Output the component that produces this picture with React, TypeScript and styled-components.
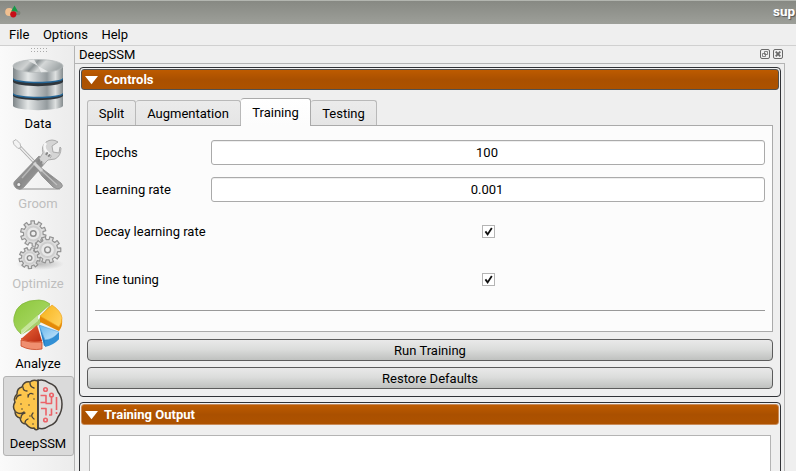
import React from "react";
import styled, { createGlobalStyle, css } from "styled-components";

const Global = createGlobalStyle`
  * { box-sizing: border-box; }
  html, body { margin: 0; background: #efefef; overflow: hidden; }
  body { font: 13px/16px Roboto, "Liberation Sans", sans-serif; color: #000; }
`;

const Window = styled.div`
  width: 796px;
  height: 471px;
  display: flex;
  flex-direction: column;
  overflow: hidden;
  background: #efefef;
`;
const TitleBar = styled.header`
  flex: 0 0 24px;
  display: flex;
  justify-content: space-between;
  padding-left: 4px;
  border-top: 1px solid #b3b6b0;
  background: linear-gradient(#878983, #9d9f99);
  overflow: hidden;
`;
const WindowName = styled.span`
  width: 24px;
  padding-left: 1px;
  white-space: nowrap;
  color: #fff;
  font-weight: 700;
  font-size: 13.5px;
  line-height: 21px;
  text-shadow: 1px 1px 1px #555;
`;
const MenuBar = styled.nav`
  flex: 0 0 22px;
  display: flex;
  gap: 13.5px;
  padding: 3px 9px 0;
  border-bottom: 1px solid #d0d0d0;
`;
const Body = styled.div`
  flex: 1;
  min-height: 0;
  display: flex;
`;
const Toolbar = styled.aside`
  flex: 0 0 75px;
  padding: 0 0 0 3px;
  border-right: 1px solid #b4b4b4;
  background: linear-gradient(90deg, #fafafa, #ececec);
`;
const Grip = styled.svg`
  display: block;
  height: 10px;
  width: 71px;
`;
const Tool = styled.div<{ $state?: "off" | "on" }>`
  width: 71px;
  height: 80px;
  display: flex;
  flex-direction: column;
  align-items: center;
  padding: 2px 1px 0 0;
  border: 1px solid transparent;
  border-radius: 3px;
  white-space: nowrap;
  svg { width: 52px; height: 52px; margin-bottom: 5px; flex: none; }
  ${(p) => p.$state === "off" && css`color: #bebebe;`}
  ${(p) => p.$state === "on" && css`background: #dadada; border-color: #b3b3b3;`}
`;
const Dock = styled.main`
  flex: 0 0 710px;
  display: flex;
  flex-direction: column;
`;
const DockTitle = styled.div`
  flex: 0 0 17px;
  display: flex;
  align-items: center;
  padding: 0 2px 0 4px;
  span { flex: 1; }
  svg { margin: 0 0 1px 3px; }
`;
const DockContent = styled.div`
  flex: 1;
  display: flex;
  flex-direction: column;
  gap: 5px;
  padding: 3px 3px 0 4px;
  border: solid #b4b4b4;
  border-width: 1px 1px 0 0;
`;
const Group = styled.section<{ $height: number }>`
  flex: 0 0 ${(p) => p.$height}px;
  padding: 1px;
  border: 1px solid #303236;
  border-radius: 4px;
`;
const GroupHeader = styled.h2<{ $edge: string }>`
  display: flex;
  align-items: center;
  gap: 5px;
  height: 21px;
  margin: 0;
  padding-left: 3px;
  border: 1px solid ${(p) => p.$edge};
  border-radius: 3px;
  background: linear-gradient(#bd5b00, #aa5000 50%, #ad5200);
  color: #fff;
  font-size: 13px;
  font-weight: 700;
`;
const GroupBody = styled.div`
  display: flex;
  flex-direction: column;
  padding: 8px 6px 0;
`;
const Tabs = styled.div`
  display: flex;
  align-items: flex-end;
  height: 27px;
`;
const Tab = styled.div<{ $width: number; $active?: boolean }>`
  width: ${(p) => p.$width}px;
  height: 25px;
  padding-top: 5px;
  text-align: center;
  border: solid #b9b9b9;
  border-width: 1px 1px 0 1px;
  border-radius: 3px 3px 0 0;
  background: linear-gradient(#ebebeb, #e5e5e5);
  & + & { border-left-width: 0; }
  ${(p) => p.$active && css`
    z-index: 1;
    height: 28px;
    margin-bottom: -1px;
    padding-top: 6px;
    border-color: #aaa;
    background: linear-gradient(#fff, #fcfcfc);
    && { border-left-width: 1px; }
  `}
`;
const Pane = styled.div`
  display: flex;
  flex-direction: column;
  height: 207px;
  padding: 14px 7px 0;
  border: 1px solid #aaa;
  background: #fcfcfc;
`;
const Field = styled.label<{ $height: number }>`
  flex: 0 0 ${(p) => p.$height}px;
  display: grid;
  grid-template-columns: 116px 554px;
  align-items: center;
  justify-items: start;
`;
const Input = styled.span`
  width: 554px;
  height: 25px;
  line-height: 24px;
  padding-right: 2px;
  text-align: center;
  border: 1px solid #aaa;
  border-radius: 3px;
  background: #fff;
  box-shadow: inset 0 1px #eee;
`;
const Check = styled.span`
  justify-self: center;
  width: 13px;
  height: 13px;
  border: 1px solid #b4b4b4;
  background: #fff;
  svg { display: block; }
`;
const Gap = styled.div<{ $size: number }>`
  flex: 0 0 ${(p) => p.$size}px;
`;
const Rule = styled.hr`
  width: 670px;
  height: 1px;
  margin: 0;
  border: 0;
  background: #999;
`;
const Actions = styled.div`
  display: flex;
  flex-direction: column;
  gap: 6px;
  padding-top: 7px;
`;
const Button = styled.button`
  height: 22px;
  padding: 2px 0 0;
  border: 1px solid #5c5c5c;
  border-radius: 4px;
  background: linear-gradient(#e9e9e9, #dcdddc 45%, #bfc1bf);
  color: #000;
  font: inherit;
  line-height: 18px;
`;
const Output = styled.div`
  height: 80px;
  margin: 2px 2px 0;
  border: 1px solid #b4b4b4;
  background: #fff;
`;

const AppIcon = () => (
  <svg width="17" height="22" viewBox="0 0 17 22">
    <ellipse cx="14" cy="12" rx="2.5" ry="2.3" fill="#7c8278" />
    <circle cx="5.2" cy="11" r="4" fill="#f1c090" />
    <path d="M10.5 4.5l3.5 6H7z" fill="#159747" />
    <circle cx="9.3" cy="13.3" r="3.1" fill="#c70d17" />
  </svg>
);

const Database = () => (
  <svg viewBox="0 0 52 52">
    <defs>
      <linearGradient id="metal">
        <stop offset="0" stopColor="#7e8588" />
        <stop offset=".12" stopColor="#a9afb1" />
        <stop offset=".3" stopColor="#e4e7e7" />
        <stop offset=".5" stopColor="#b9bec0" />
        <stop offset=".68" stopColor="#949b9e" />
        <stop offset=".85" stopColor="#dde0e0" />
        <stop offset="1" stopColor="#868d8f" />
      </linearGradient>
      <linearGradient id="lid" x1="0" y1="0" x2="1" y2=".25">
        <stop offset="0" stopColor="#a0a6a8" />
        <stop offset=".35" stopColor="#cfd2d2" />
        <stop offset=".5" stopColor="#8d9496" />
        <stop offset=".65" stopColor="#d5d8d8" />
        <stop offset="1" stopColor="#a3a9aa" />
      </linearGradient>
    </defs>
    <path d="M1 36v11c3 5.5 47 5.5 50 0V36z" fill="url(#metal)" />
    <path d="M1 34v3c4 5.5 46 5.5 50 0v-3z" fill="#30363b" />
    <path d="M1 33v2.5c4 5 46 5 50 0V33z" fill="#236596" />
    <path d="M1 22v12c4 5 46 5 50 0V22z" fill="url(#metal)" />
    <path d="M1 19v4c4 5.5 46 5.5 50 0v-4z" fill="#30363b" />
    <path d="M1 18v2.5c4 5 46 5 50 0V18z" fill="#236596" />
    <path d="M1 7v12c4 5 46 5 50 0V7z" fill="url(#metal)" />
    <ellipse cx="26" cy="7" rx="25" ry="6.5" fill="url(#lid)" stroke="#b5babb" strokeWidth=".8" />
    <path d="M26 7L16 1.4l6-.8zM26 7l10 5.6-7 .7z" fill="#eff0f0" opacity=".8" />
  </svg>
);

const Tools = () => (
  <svg viewBox="0 0 52 52">
    <defs>
      <linearGradient id="handle" x1="0" y1="0" x2="1" y2="1">
        <stop offset="0" stopColor="#aaa" />
        <stop offset=".5" stopColor="#8b8b8b" />
        <stop offset="1" stopColor="#aaa" />
      </linearGradient>
    </defs>
    <path d="M7 50h41" stroke="#b0b0b0" strokeWidth="1.3" />
    <path d="M7 7l20 21" stroke="#a9a9a9" strokeWidth="3.2" />
    <path d="M7 7l20 21" stroke="#efefef" strokeWidth="1.5" />
    <path d="M1 2.5l3-2 4 4 1 4-3 1-4-4z" fill="#f3f3f3" stroke="#b8b8b8" />
    <path d="M23 27q3-2 5 1l21 16q3 3 0 5-4 2-8-1L30 37z" fill="url(#handle)" stroke="#888" strokeWidth=".8" />
    <path d="M29 31l16 15" stroke="#c0c0c0" strokeWidth="1.2" />
    <path d="M27 17l7 6-22 25q-4 4-8 1-4-4-1-7z" fill="url(#handle)" stroke="#8d8d8d" strokeWidth=".8" />
    <path d="M24 23L10 39" stroke="#b5b5b5" strokeWidth="1.5" />
    <path d="M22 24l8 8" stroke="#d5d5d5" strokeWidth="3" />
    <circle cx="6.8" cy="45.5" r="2.2" fill="#efefef" stroke="#858585" strokeWidth="1.3" />
    <path d="M27 20l4-6q-2-7 3-11 6-4 12 0l-6 4 1 6 6 1 1-6 1 1q0 8-6 11l-7 1-5 5z" fill="#d5d5d5" stroke="#aaa" />
    <path d="M34 4q-3 3 0 8l4 4" fill="none" stroke="#f7f7f7" strokeWidth="2.5" />
    <path d="M34 14l5 4M26 21l5 4" stroke="#888" strokeWidth="3" strokeDasharray="2 1" />
  </svg>
);

const Gear = ({ x, y, r, teeth, turn = 0 }: { x: number; y: number; r: number; teeth: number; turn?: number }) => {
  const step = 360 / teeth;
  const pt = (radius: number, a: number) => {
    const t = ((a + turn) * Math.PI) / 180;
    return `${(Math.cos(t) * radius).toFixed(2)} ${(Math.sin(t) * radius).toFixed(2)}`;
  };
  const points = Array.from({ length: teeth }, (_, i) => {
    const a = i * step;
    return [pt(r * 0.77, a - step * 0.27), pt(r, a - step * 0.22), pt(r, a + step * 0.22), pt(r * 0.77, a + step * 0.27)].join(" ");
  }).join(" ");
  return (
    <g transform={`translate(${x} ${y})`}>
      <polygon points={points} fill="#dedede" stroke="#939393" strokeWidth="1.2" strokeLinejoin="round" />
      <circle r={r * 0.55} fill="#e9e9e9" stroke="#cecece" strokeWidth="2" />
      <circle r={r * 0.22} fill="#eee" stroke="#8d8d8d" strokeWidth="1.4" />
    </g>
  );
};

const Gears = () => (
  <svg viewBox="0 0 52 52">
    <defs>
      <radialGradient id="shade">
        <stop offset="0" stopColor="#bbb" />
        <stop offset="1" stopColor="#bbb" stopOpacity="0" />
      </radialGradient>
    </defs>
    <ellipse cx="28" cy="45" rx="24" ry="6" fill="url(#shade)" />
    <Gear x={21.3} y={14.5} r={12.8} teeth={10} turn={15} />
    <Gear x={35.6} y={30.8} r={13.3} teeth={10} />
    <Gear x={17.6} y={39} r={10.6} teeth={9} turn={8} />
  </svg>
);

const Pie = () => (
  <svg viewBox="0 0 52 52">
    <defs>
      <linearGradient id="green" x1="0" y1="0" x2="1" y2="1">
        <stop offset="0" stopColor="#8cc63b" />
        <stop offset=".6" stopColor="#a1d45a" />
        <stop offset="1" stopColor="#d1eda8" />
      </linearGradient>
      <linearGradient id="amber" x1="0" y1="0" x2="1" y2=".6">
        <stop offset="0" stopColor="#f6b219" />
        <stop offset="1" stopColor="#ffcf58" />
      </linearGradient>
      <linearGradient id="red" x1="0" y1="0" x2="1" y2="1">
        <stop offset="0" stopColor="#ee6a3c" />
        <stop offset="1" stopColor="#b92b13" />
      </linearGradient>
      <linearGradient id="blue" x1="0" y1="0" x2="1" y2="1">
        <stop offset="0" stopColor="#65b5ed" />
        <stop offset="1" stopColor="#c8e6fa" />
      </linearGradient>
    </defs>
    <path d="M9 36l18-16 11-15v6L27 26 9 36z" fill="#a7cf6d" />
    <path d="M9 35Q0 27 2 18 5 1 27 1q6 0 11 4L9 32z" fill="url(#green)" stroke="#80b53a" strokeWidth=".7" />
    <path d="M9 31v4l17-13V16z" fill="#c6e69a" />
    <path d="M28 17v6l19 9q4-5 3-12z" fill="#e48a08" />
    <path d="M28 17L40 6q9 6 10 13 0 5-3 9z" fill="url(#amber)" stroke="#f0a31b" strokeWidth=".7" />
    <path d="M9 39v8q10 5 21 2v-8z" fill="#e77b58" />
    <path d="M9 40L25 26l5 16q-12 2-21-2z" fill="url(#red)" />
    <path d="M9 41q9 3 21 2v7q-12 2-21-3z" fill="#ef8f70" stroke="#c94825" strokeWidth=".8" />
    <path d="M27 26l5 21q10-2 15-7v-6z" fill="#277fc4" />
    <path d="M27 26l20 7q-5 7-14 8z" fill="url(#blue)" stroke="#5cabe3" strokeWidth=".7" />
    <path d="M33 42q9-2 14-8v6q-5 6-14 8z" fill="#3290d5" />
  </svg>
);

const Brain = () => (
  <svg viewBox="0 0 52 52" fill="none" strokeLinecap="round" strokeLinejoin="round">
    <path d="M26 2q-5-2-8 1-6-1-8 5-5 1-5 7-4 4-2 8-3 5 0 9 0 6 5 7 1 6 6 6 4 5 8 4 2 3 4 1z" fill="#fdc64c" stroke="#4b4439" strokeWidth="1.5" />
    <path d="M11 8q0 4 4 4M18 4q0 4 4 5M4 20q1-4 5-4M16 18q1-5 5-3M4 33q4 3 8 0M9 39q0-4 4-5M21 34q-3 3 1 6M13 44q0-3 3-4" stroke="#4b4439" strokeWidth="1.3" />
    <path d="M16 16h0M9 25h0M17 26h0M22 20h0M10 30h0M18 37h0M21 45h0" stroke="#4b4439" strokeWidth="1.6" />
    <path d="M26 1.5Q32 0 37 4q7 2 9 9 4 5 4 12 0 8-4 13-2 7-9 9-5 4-11 2z" fill="#e0dedd" stroke="#45403c" strokeWidth="1.5" />
    <g stroke="#ec6268" strokeWidth="1.6" strokeLinecap="butt">
      <path d="M28.5 16.5H34v7h-5.5M39.5 18v6.5h-6M29 29.5h5v7M39.5 29.5v6.5h-2.500M44.500 18v13M44.500 33v2" />
      <circle cx="33.500" cy="10.500" r="1.800" /><circle cx="39.500" cy="16" r="1.800" /><circle cx="33.500" cy="41" r="1.800" />
    </g>
    <path d="M26 1v49" stroke="#45403c" strokeWidth="1.5" />
  </svg>
);

const DockButton = ({ close }: { close?: boolean }) => (
  <svg width="10" height="10" viewBox="0 0 10 10" fill="none" stroke="#696969">
    <rect x=".5" y=".5" width="9" height="9" rx="1.5" />
    {close ? <path d="M2.7 2.7l4.6 4.6M7.3 2.7L2.7 7.3" strokeWidth="1.8" /> : <path d="M4.500 2.500h3v3h-3zM2.500 4.500h3v3h-3z" strokeWidth=".8" />}
  </svg>
);

const Arrow = () => (
  <svg width="14" height="10" viewBox="0 0 14 10"><path d="M0 1h13L6.500 9.300z" fill="#fff" /></svg>
);

const CheckBox = () => (
  <Check>
    <svg width="11" height="11" viewBox="0 0 11 11"><path d="M2.400 5.400l2.200 3L8.800 1.900" fill="none" stroke="#111" strokeWidth="1.8" /></svg>
  </Check>
);

export default function App() {
  return (
    <Window>
      <Global />
      <TitleBar><AppIcon /><WindowName>sup</WindowName></TitleBar>
      <MenuBar><span>File</span><span>Options</span><span>Help</span></MenuBar>
      <Body>
        <Toolbar>
          <Grip viewBox="0 0 71 10"><path d="M28 2.5h17M28 5.500h17" stroke="#aaa" strokeDasharray="1 2" /></Grip>
          <Tool><Database />Data</Tool>
          <Tool $state="off"><Tools />Groom</Tool>
          <Tool $state="off"><Gears />Optimize</Tool>
          <Tool><Pie />Analyze</Tool>
          <Tool $state="on"><Brain />DeepSSM</Tool>
        </Toolbar>
        <Dock>
          <DockTitle><span>DeepSSM</span><DockButton /><DockButton close /></DockTitle>
          <DockContent>
            <Group $height={330}>
              <GroupHeader $edge="#505050"><Arrow />Controls</GroupHeader>
              <GroupBody>
                <Tabs>
                  <Tab $width={49}>Split</Tab>
                  <Tab $width={105}>Augmentation</Tab>
                  <Tab $width={70} $active>Training</Tab>
                  <Tab $width={66}>Testing</Tab>
                </Tabs>
                <Pane>
                  <Field $height={25}>Epochs<Input>100</Input></Field>
                  <Gap $size={12} />
                  <Field $height={25}>Learning rate<Input>0.001</Input></Field>
                  <Gap $size={17} />
                  <Field $height={25}>Decay learning rate<CheckBox /></Field>
                  <Gap $size={23} />
                  <Field $height={25}>Fine tuning<CheckBox /></Field>
                  <Gap $size={18} />
                  <Rule />
                </Pane>
                <Actions>
                  <Button>Run Training</Button>
                  <Button>Restore Defaults</Button>
                </Actions>
              </GroupBody>
            </Group>
            <Group $height={120}>
              <GroupHeader $edge="#c98b58"><Arrow />Training Output</GroupHeader>
              <GroupBody><Output /></GroupBody>
            </Group>
          </DockContent>
        </Dock>
      </Body>
    </Window>
  );
}
